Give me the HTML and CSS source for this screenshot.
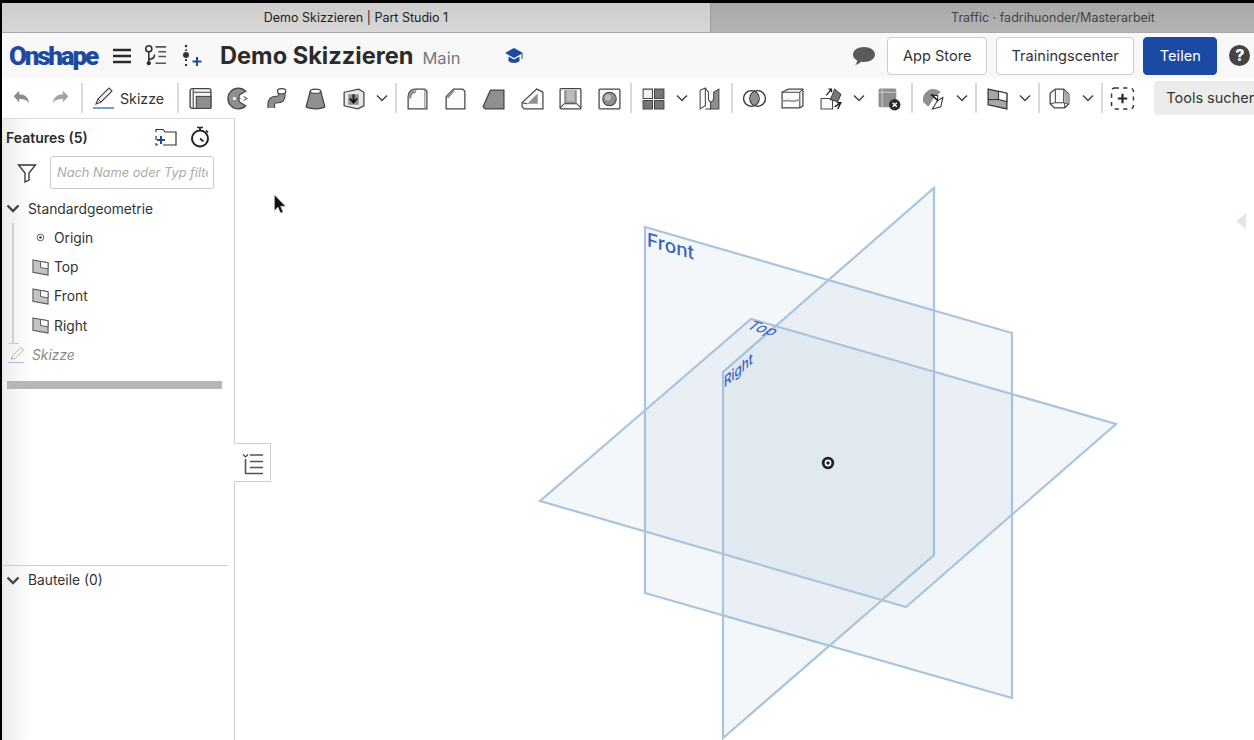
FILE: index.html
```html
<!DOCTYPE html>
<html lang="de">
  <head>
    <meta charset="UTF-8" />
    <title>Demo Skizzieren | Part Studio 1</title>
    <link rel="stylesheet" href="styles.css">
  </head>

  <body>
    <div class="tabs">
      <div class="tab active-tab">Demo Skizzieren | Part Studio 1</div>
      <div class="tab">Traffic · fadrihuonder/Masterarbeit</div>
    </div>

    <div class="header">
      <span class="logo">Onshape</span>
      <svg class="head-icon menu-icon" viewBox="0 0 20 16"><path d="M1 2h18M1 8h18M1 14h18" stroke="#2b2b2b" stroke-width="2.6"/></svg>
      <svg class="head-icon branch-icon" viewBox="0 0 26 24"><circle cx="6" cy="5" r="3.2" fill="none" stroke="#2b2b2b" stroke-width="1.6"/><circle cx="6" cy="20" r="2.2" fill="#2b2b2b"/><path d="M6 8v10M6 16c5 0 6-2 6-5" fill="none" stroke="#2b2b2b" stroke-width="1.6"/><path d="M13 3h11M16 8h8M16 13h8M13 20h11" stroke="#555" stroke-width="1.6"/></svg>
      <svg class="head-icon insert-icon" viewBox="0 0 24 24"><circle cx="6" cy="2" r="1.3" fill="#333"/><circle cx="6" cy="11" r="3" fill="#333"/><path d="M6 5.500v1.600M6 15v2M6 20v2" stroke="#333" stroke-width="2"/><path d="M17 13v9M12.500 17.500h9" stroke="#1b4aa0" stroke-width="2"/></svg>
      <h1 class="doc-title">Demo Skizzieren</h1>
      <span class="doc-branch">Main</span>
      <svg class="head-icon cap-icon" viewBox="0 0 20 18"><path d="M10 1 19 6 10 11 1 6z" fill="#1b4aa0"/><path d="M4.500 9.500V14c2 2.500 9 2.500 11 0V9.500L10 12.500z" fill="#1b4aa0"/><path d="M18 6v6" stroke="#1b4aa0"/></svg>
      <div class="head-right">
        <svg class="head-icon chat-icon" viewBox="0 0 24 20"><path d="M12 1c6 0 11 3 11 7.500S18 16 12 16c-1 0-2 0-3-.2C7.500 17.500 5.500 18.500 3 19c1-1 2-2.500 2.200-4.500C2.500 13 1 11 1 8.500 1 4 6 1 12 1z" fill="#5a5a5a"/></svg>
        <button class="btn">App Store</button>
        <button class="btn">Trainingscenter</button>
        <button class="btn btn-primary">Teilen</button>
        <span class="help">?</span>
        <svg class="help-chev" viewBox="0 0 8 5"><path d="M1 1l3 3 3-3" fill="none" stroke="#444" stroke-width="1.300"/></svg>
      </div>
    </div>

    <div class="toolbar">
      <div class="tool small"><svg viewBox="0 0 24 24"><path d="M4 10l6-6v4c6 0 10 3 11 10-2-4-6-5-11-5v4z" fill="#8c8c8c"/></svg></div>
      <div class="tool small redo"><svg viewBox="0 0 24 24"><path d="M20 10l-6-6v4C8 8 4 11 3 18c2-4 6-5 11-5v4z" fill="#a4a4a4"/></svg></div>
      <div class="sep"></div>
      <div class="sketch-btn">
        <svg viewBox="0 0 24 24"><path d="M4 18 6 13 17 2l3 3L9 16z" fill="#fff" stroke="#444" stroke-width="1.200"/><path d="M6 13l3 3" stroke="#444"/><path d="M1 22h21" stroke="#4a78c8" stroke-width="1.500"/></svg>
        <span>Skizze</span>
      </div>
      <div class="sep"></div>
      <div class="tool"><svg viewBox="0 0 24 24"><rect x="2" y="2.500" width="20" height="19" rx="2" fill="#f4f4f4" stroke="#444" stroke-width="1.300"/><path d="M5 3v18M5 6h17" stroke="#444"/><rect x="8" y="10" width="14" height="11.500" fill="#8f8f8f" stroke="#444"/></svg></div>
      <div class="tool"><svg viewBox="0 0 24 24"><path d="M19 5a10 10 0 1 0 0 14l-6-3.500-1-3.500 1-3.500z" fill="#8f8f8f" stroke="#444" stroke-width="1.200"/><circle cx="8" cy="12" r="1.500" fill="#fff"/><path d="M12 12h2M17 10l3 2-3 2" stroke="#555" fill="none"/></svg></div>
      <div class="tool"><svg viewBox="0 0 24 24"><path d="M6 21v-3c0-4 2-5 5-5s5-1 5-4V6" fill="none" stroke="#444" stroke-width="7.500"/><path d="M6 21v-3c0-4 2-5 5-5s5-1 5-4V6" fill="none" stroke="#8f8f8f" stroke-width="5.500"/><ellipse cx="16" cy="5" rx="4" ry="2.500" fill="#fff" stroke="#444" stroke-width="1.100"/></svg></div>
      <div class="tool"><svg viewBox="0 0 24 24"><path d="M7 5 3 20c3 2.500 15 2.500 18 0L17 5z" fill="#8f8f8f" stroke="#444" stroke-width="1.200"/><ellipse cx="12" cy="5" rx="5" ry="2" fill="#fff" stroke="#444"/></svg></div>
      <div class="tool"><svg viewBox="0 0 24 24"><path d="M3 6l14-3 5 3v13l-6 3-13-3z" fill="#e8e8e8" stroke="#444" stroke-width="1.200"/><path d="M7 8h10v10H7z" fill="#8f8f8f"/><path d="M12 8v7M8.500 12l3.500 4 3.500-4" fill="none" stroke="#111" stroke-width="1.800"/></svg></div>
      <div class="chev"><svg viewBox="0 0 12 8"><path d="M1 1.500l5 5 5-5" fill="none" stroke="#444" stroke-width="1.500"/></svg></div>
      <div class="sep"></div>
      <div class="tool nudge-1"><svg viewBox="0 0 24 24"><path d="M3 22V10c0-4 3-7 7-7h9l2 2v17z" fill="#fbfbfb" stroke="#444" stroke-width="1.200"/><path d="M3 12c0-5 3-8 8-8l-1 3c-3 0-4 2-4 5z" fill="#8f8f8f"/><path d="M19 3v19" stroke="#888"/></svg></div>
      <div class="tool"><svg viewBox="0 0 24 24"><path d="M3 22V10l7-7h9l2 2v17z" fill="#fbfbfb" stroke="#444" stroke-width="1.200"/><path d="M3 10l7-7 1 2-6 7z" fill="#8f8f8f"/></svg></div>
      <div class="tool"><svg viewBox="0 0 24 24"><path d="M2 20 9 4h13v18H4z" fill="#8f8f8f" stroke="#444" stroke-width="1.200"/></svg></div>
      <div class="tool"><svg viewBox="0 0 24 24"><path d="M2 16 16 3l6 3v16H4l-2-2z" fill="#fbfbfb" stroke="#444" stroke-width="1.200"/><path d="M7 17 17 7v10z" fill="#8f8f8f"/><path d="M2 16l5 1" stroke="#444"/></svg></div>
      <div class="tool"><svg viewBox="0 0 24 24"><rect x="2" y="2.500" width="20" height="19.500" rx="1" fill="#fbfbfb" stroke="#444" stroke-width="1.200"/><path d="M6 4h12v13H6z" fill="#8f8f8f"/><path d="M8 4h8v11H8z" fill="#bbb"/><path d="M2 21l4-4h12l4 4" fill="none" stroke="#444"/></svg></div>
      <div class="tool"><svg viewBox="0 0 24 24"><rect x="2" y="3" width="20" height="19" rx="1" fill="#fbfbfb" stroke="#444" stroke-width="1.200"/><circle cx="12" cy="12.500" r="6.500" fill="#8f8f8f" stroke="#444"/><circle cx="10.500" cy="11" r="3" fill="#bdbdbd"/></svg></div>
      <div class="sep"></div>
      <div class="tool"><svg viewBox="0 0 24 24"><path d="M2 12V3h9v9z" fill="#f2f2f2" stroke="#444"/><path d="M13 3h9v9h-9zM2 14h9v8H2zM13 14h9v8h-9z" fill="#777" stroke="#444"/></svg></div>
      <div class="chev"><svg viewBox="0 0 12 8"><path d="M1 1.500l5 5 5-5" fill="none" stroke="#444" stroke-width="1.500"/></svg></div>
      <div class="tool"><svg viewBox="0 0 24 24"><path d="M3 4l5-2v17l-5 3zM8 2l3 4v7l2 3v6H8" fill="#fbfbfb" stroke="#444"/><path d="M16 6l5-3v19h-8v-6l3-3z" fill="#8f8f8f" stroke="#444"/></svg></div>
      <div class="sep"></div>
      <div class="tool"><svg viewBox="0 0 24 24"><circle cx="9" cy="12" r="7.500" fill="#fbfbfb" stroke="#333" stroke-width="1.300"/><circle cx="15" cy="12" r="7.500" fill="none" stroke="#333" stroke-width="1.300"/><path d="M12 5.500a7.500 7.500 0 0 1 0 13 7.500 7.500 0 0 1 0-13z" fill="#8f8f8f"/></svg></div>
      <div class="tool"><svg viewBox="0 0 24 24"><path d="M2 6l6-3h14v16l-3 2H2z" fill="#fbfbfb" stroke="#444" stroke-width="1.200"/><path d="M2 6h17v15M19 6l3-3" fill="none" stroke="#444"/><path d="M2 15c6-3 10 2 17-2" fill="none" stroke="#999" stroke-width="1.500"/></svg></div>
      <div class="tool"><svg viewBox="0 0 24 24"><path d="M2 12h11v10H2z" fill="#fbfbfb" stroke="#444"/><path d="M15 3l6 5-3 7-7-2z" fill="#777" stroke="#444"/><path d="M7 9l5-6M9 3h3v3M15 20l6-4M18 22l3-6-4 0" fill="none" stroke="#222" stroke-width="1.300"/></svg></div>
      <div class="chev"><svg viewBox="0 0 12 8"><path d="M1 1.500l5 5 5-5" fill="none" stroke="#444" stroke-width="1.500"/></svg></div>
      <div class="tool nudge-2"><svg viewBox="0 0 24 24"><rect x="2" y="3" width="16" height="17" rx="1" fill="#8f8f8f" stroke="#888"/><path d="M5 3v17M2 6h16" stroke="#ccc"/><circle cx="17" cy="18" r="5.500" fill="#2b2b2b"/><path d="M15 16l4 4M19 16l-4 4" stroke="#fff" stroke-width="1.400"/></svg></div>
      <div class="sep"></div>
      <div class="tool"><svg viewBox="0 0 24 24"><path d="M2 15a10 10 0 0 1 17-9l-6 4-4 7-2 3z" fill="#8f8f8f"/><path d="M10 9h6v5zM16 14l5-3-2 9-8 2 3-5z" fill="#fff" stroke="#333"/><path d="M10 8l6 6" stroke="#222" stroke-width="1.400"/></svg></div>
      <div class="chev"><svg viewBox="0 0 12 8"><path d="M1 1.500l5 5 5-5" fill="none" stroke="#444" stroke-width="1.500"/></svg></div>
      <div class="sep"></div>
      <div class="tool nudge-1"><svg viewBox="0 0 24 24"><path d="M3 3l18 4v15L3 18z" fill="#a6a6a6" stroke="#333" stroke-width="1.200"/><path d="M13 5l8 2v8l-8-2z" fill="#fbfbfb" stroke="#333"/><path d="M3 13h10" stroke="#333"/></svg></div>
      <div class="chev"><svg viewBox="0 0 12 8"><path d="M1 1.500l5 5 5-5" fill="none" stroke="#444" stroke-width="1.500"/></svg></div>
      <div class="sep"></div>
      <div class="tool"><svg viewBox="0 0 24 24"><path d="M3 7l5-4h8l5 5v9l-4 4H7l-4-4z" fill="#fbfbfb" stroke="#444" stroke-width="1.200"/><path d="M8 3v13l-5 1M8 16h9v5M16 3v13l5 1" fill="none" stroke="#444"/><path d="M16 4l5 4v9l-4-1z" fill="#aaa"/></svg></div>
      <div class="chev"><svg viewBox="0 0 12 8"><path d="M1 1.500l5 5 5-5" fill="none" stroke="#444" stroke-width="1.500"/></svg></div>
      <div class="sep"></div>
      <div class="tool"><svg viewBox="0 0 24 24"><rect x="1.500" y="2" width="21" height="20" rx="3" fill="none" stroke="#333" stroke-width="1.400" stroke-dasharray="4 4.200"/><path d="M12 7.500v9M7.500 12h9" stroke="#222" stroke-width="2"/></svg></div>
      <div class="tool-search">Tools suchen</div>
    </div>

    <div class="main">
      <div class="sidebar">
        <div class="feat-head">
          <span class="feat-title">Features (5)</span>
          <svg class="folder-icon" viewBox="0 0 22 18"><path d="M1 4V1.500h7L10 4h11v13H8" fill="none" stroke="#333" stroke-width="1.200"/><path d="M1 8v4M1 15v2h2" stroke="#333" stroke-width="1.200" fill="none"/><path d="M6 8v8M2 12h8" stroke="#1b4aa0" stroke-width="2"/></svg>
          <svg class="timer-icon" viewBox="0 0 20 22"><circle cx="10" cy="12.500" r="8" fill="none" stroke="#222" stroke-width="2"/><path d="M7 1.500h6M10 2v2.500M16 4.500l2 2M10 12.500l3.500 3" stroke="#222" stroke-width="1.700" fill="none"/></svg>
        </div>
        <div class="filter-row">
          <svg class="filter-icon" viewBox="0 0 20 20"><path d="M1.500 2h17l-6.500 8v7l-4 2v-9z" fill="none" stroke="#333" stroke-width="1.300"/></svg>
          <div class="filter-input"><span>Nach Name oder Typ filtern</span></div>
        </div>
        <div class="tree-head">
          <svg class="tree-chev" viewBox="0 0 14 9"><path d="M1.500 1.500 7 7l5.500-5.500" fill="none" stroke="#444" stroke-width="2.400"/></svg>
          <span>Standardgeometrie</span>
        </div>
        <ul class="tree">
          <li><svg class="tree-icon" viewBox="0 0 18 18"><circle cx="9" cy="9" r="3.500" fill="none" stroke="#555"/><circle cx="9" cy="9" r="1.400" fill="#444"/></svg>Origin</li>
          <li><svg class="tree-icon" viewBox="0 0 18 18"><path d="M1 1l16 3v13L1 14z" fill="#c4c4c4" stroke="#555" stroke-width="1.100"/><path d="M9 2.500l8 1.500v6.500l-8-1.500z" fill="#fff" stroke="#555"/></svg>Top</li>
          <li><svg class="tree-icon" viewBox="0 0 18 18"><path d="M1 1l16 3v13L1 14z" fill="#c4c4c4" stroke="#555" stroke-width="1.100"/><path d="M9 2.500l8 1.500v6.500l-8-1.500z" fill="#fff" stroke="#555"/></svg>Front</li>
          <li><svg class="tree-icon" viewBox="0 0 18 18"><path d="M1 1l16 3v13L1 14z" fill="#c4c4c4" stroke="#555" stroke-width="1.100"/><path d="M9 2.500l8 1.500v6.500l-8-1.500z" fill="#fff" stroke="#555"/></svg>Right</li>
        </ul>
        <div class="sketch-row">
          <svg viewBox="0 0 18 18"><path d="M3 13 4.500 10 13 1.500 15.500 4 7 12.500z" fill="#fff" stroke="#aaa"/><path d="M0 16.500h16" stroke="#a8bfe0"/></svg>
          <span>Skizze</span>
        </div>
        <div class="roll-bar"></div>
        <div class="parts-head">
          <svg class="tree-chev" viewBox="0 0 14 9"><path d="M1.500 1.500 7 7l5.500-5.500" fill="none" stroke="#444" stroke-width="2.400"/></svg>
          <span>Bauteile (0)</span>
        </div>
      </div>

      <div class="viewport">
        <div class="panel-tab">
          <svg viewBox="0 0 22 22"><path d="M1 1.500l2.500 2.500L6 1.500" fill="none" stroke="#444" stroke-width="1.200"/><path d="M3.500 6v15" stroke="#555" stroke-width="1.600"/><path d="M8 2h13M8 8.500h13M8 14.500h13M3.500 20.500H21" stroke="#555" stroke-width="1.300"/></svg>
        </div>

        <svg class="scene" viewBox="235 118 1019 622">
          <g class="plane">
            <polygon points="645,227 1012,333 1012,698 645,593"/>
            <polygon points="934,188 934,555 723,738 723,372"/>
            <polygon points="751,319 1116,424 906,607 540,501"/>
          </g>
          <text class="label label-front" transform="matrix(1 .289 0 1 647 246)">Front</text>
          <text class="label label-top" transform="matrix(.96 .276 -.75 .65 745 328)">Top</text>
          <text class="label label-right" transform="matrix(.755 -.655 0 1 724 388)">Right</text>
          <circle cx="828" cy="463" r="4.800" fill="#fff" stroke="#222" stroke-width="2.800"/>
          <circle cx="828" cy="463" r="1.800" fill="#222"/>
          <polygon points="1236,221 1246,213 1246,229" fill="#dfe6ee"/>
          <path d="M274.500 195v15.500l3.500-3.500 2.500 6 2.500-1-2.500-5.800h5z" fill="#111" stroke="#bbb" stroke-width=".6"/>
        </svg>
      </div>
    </div>
  </body>
</html>
```

FILE: styles.css
```css
* {
  margin: 0;
  padding: 0;
  box-sizing: border-box;
}

html,
body {
  height: 740px;
  overflow: hidden;
}

body {
  font-family: Inter, "Noto Sans", sans-serif;
  font-size: 14px;
  color: #333;
  background: #fff;
  border-top: 3px solid #000;
  border-left: 2px solid #000;
}

li {
  list-style: none;
}

/* browser tabs */
.tabs {
  display: flex;
  height: 30px;
  border-bottom: 1px solid #aaa;
  font-size: 12.500px;
  overflow: hidden;
}

.tab {
  flex: 0 0 auto;
  width: 684px;
  line-height: 29px;
  text-align: center;
  color: #444;
  background: linear-gradient(#a8a8a8, #b4b4b4);
}

.active-tab {
  width: 709px;
  color: #222;
  background: linear-gradient(#cdcdcd, #d7d7d7);
  border-right: 1px solid #999;
}

/* document header */
.header {
  display: flex;
  align-items: center;
  height: 45px;
  padding-left: 7px;
  background: #f8f8f8;
  overflow: hidden;
}

.header > * {
  flex-shrink: 0;
}

.logo {
  width: 90px;
  font-family: Roboto, sans-serif;
  font-size: 26px;
  font-weight: 900;
  letter-spacing: -2.200px;
  color: #1b4aa0;
}

.menu-icon {
  width: 20px;
  height: 16px;
  margin-left: 13px;
}

.branch-icon {
  width: 25px;
  height: 23px;
  margin-left: 11px;
}

.insert-icon {
  width: 24px;
  height: 24px;
  margin-left: 12px;
}

.doc-title {
  margin-left: 16px;
  font-size: 23.600px;
  font-weight: 700;
  color: #2b2b2b;
  white-space: nowrap;
}

.doc-branch {
  margin-left: 9px;
  padding-top: 4px;
  font-size: 16.500px;
  color: #777;
}

.cap-icon {
  width: 20px;
  height: 18px;
  margin-left: 44px;
}

.head-right {
  display: flex;
  align-items: center;
  margin-left: 328px;
}

.chat-icon {
  width: 24px;
  height: 20px;
  margin-right: 11px;
}

.btn {
  height: 38px;
  padding: 0 14.500px;
  margin-right: 9px;
  font: 14.600px Inter, "Noto Sans", sans-serif;
  color: #333;
  background: #fff;
  border: 1px solid #ccc;
  border-radius: 4px;
}

.btn-primary {
  padding: 0 15.500px;
  color: #fff;
  background: #1a4aa3;
  border-color: #1a4aa3;
}

.help {
  flex: 0 0 21px;
  height: 21px;
  margin-left: 3px;
  border-radius: 50%;
  font-size: 16px;
  font-weight: 800;
  line-height: 21px;
  text-align: center;
  color: #fff;
  background: #444;
}

.help-chev {
  flex: 0 0 8px;
  height: 5px;
  margin-left: 3px;
}

/* feature toolbar */
.toolbar {
  display: flex;
  align-items: center;
  height: 40px;
  background: #fff;
  white-space: nowrap;
  overflow: hidden;
}

.tool {
  flex: 0 0 38.400px;
  display: flex;
  justify-content: center;
}

.tool svg {
  width: 25px;
  height: 25px;
}

.tool.small {
  flex-basis: 38px;
}

.tool.small svg {
  width: 22px;
  height: 22px;
}

.redo {
  margin-left: 2px;
  margin-right: -1px;
}

.nudge-1 {
  margin-left: 1px;
}

.nudge-2 {
  margin-left: 2px;
}

.chev {
  flex: 0 0 18px;
  display: flex;
  justify-content: center;
}

.chev svg {
  width: 12px;
  height: 8px;
}

.sep {
  flex: 0 0 2px;
  height: 30px;
  margin: 0 2px;
  background: #d9d9d9;
}

.chev + .sep {
  margin: 0 0 0 4px;
}

.sketch-btn {
  display: flex;
  align-items: center;
  gap: 4px;
  flex: 0 0 auto;
  padding: 0 11px 0 7px;
  font-size: 14.200px;
  color: #333;
}

.sketch-btn svg {
  width: 24px;
  height: 24px;
}

.tool-search {
  flex: 0 0 auto;
  height: 34px;
  margin-left: 13px;
  padding: 0 12px;
  font-size: 14.500px;
  line-height: 34px;
  border-radius: 4px;
  background: #ececec;
}

/* feature list */
.main {
  display: flex;
  height: 622px;
}

.sidebar {
  flex: 0 0 233px;
  border-right: 1px solid #cfcfcf;
  border-top: 1px solid #dcdcdc;
  background: linear-gradient(to right, #ececec, #fff 30px);
  overflow: hidden;
}

.feat-head {
  display: flex;
  align-items: center;
  height: 36px;
  padding-left: 4px;
}

.feat-title {
  width: 149px;
  font-weight: 600;
  color: #2b2b2b;
}

.folder-icon {
  width: 22px;
  height: 18px;
}

.timer-icon {
  width: 20px;
  height: 22px;
  margin-left: 13px;
}

.filter-row {
  display: flex;
  align-items: center;
  height: 33px;
  margin-top: 1px;
}

.filter-icon {
  width: 20px;
  height: 20px;
  margin: 0 13px 0 15px;
}

.filter-input {
  width: 164px;
  height: 33px;
  padding: 0 5px 0 6px;
  font-size: 12.800px;
  line-height: 31px;
  font-style: italic;
  white-space: nowrap;
  color: #aaa;
  background: #fff;
  border: 1px solid #ccc;
  border-radius: 3px;
  overflow: hidden;
}

.filter-input span {
  display: block;
  overflow: hidden;
}

.tree-head,
.parts-head {
  display: flex;
  align-items: center;
  gap: 8px;
  height: 29px;
  padding-left: 4px;
  font-size: 13.800px;
}

.tree-head {
  margin-top: 5px;
}

.tree-chev {
  width: 14px;
  height: 9px;
}

.tree {
  position: relative;
  padding-left: 30px;
  font-size: 13.800px;
}

/* line that joins the default planes */
.tree::before {
  content: "";
  position: absolute;
  left: 6px;
  top: 0;
  bottom: -3px;
  width: 11px;
  border-bottom: 1px solid #cfcfcf;
  background: linear-gradient(#cfcfcf, #cfcfcf) no-repeat 4px 0 / 2px 100%;
}

.tree li {
  display: flex;
  align-items: center;
  gap: 5px;
  height: 29.400px;
}

.tree-icon {
  width: 17px;
  height: 17px;
  flex: 0 0 auto;
}

.sketch-row {
  display: flex;
  align-items: center;
  gap: 6px;
  height: 29px;
  padding-left: 6px;
  font-size: 13.800px;
  font-style: italic;
  color: #8a8a8a;
}

.sketch-row svg {
  width: 18px;
  height: 18px;
}

.roll-bar {
  width: 215px;
  height: 8px;
  margin: 11px 0 176px 5px;
  background: #b6b6b6;
}

.parts-head {
  width: 226px;
  height: 30px;
  border-top: 1px solid #cfcfcf;
}

/* 3d view */
.viewport {
  position: relative;
  flex: 1;
}

.scene {
  position: absolute;
  left: 0;
  top: 0;
  width: 1019px;
  height: 622px;
}

.plane polygon {
  fill: rgba(130, 165, 200, 0.085);
  stroke: #a9c4df;
  stroke-width: 2.200;
}

.label {
  font-family: Inter, "Noto Sans", sans-serif;
  fill: #3a62bc;
}

.label-front {
  font-size: 19px;
  font-weight: 500;
}

.label-top {
  font-size: 16px;
}

.label-right {
  font-size: 15.500px;
  font-weight: 500;
}

.panel-tab {
  position: absolute;
  left: -1px;
  top: 325px;
  z-index: 2;
  width: 37px;
  height: 39px;
  padding: 9px 0 0 7px;
  background: #fff;
  border: 1px solid #cfcfcf;
  border-left: 1px solid #fff;
}

.panel-tab svg {
  display: block;
  width: 22px;
  height: 22px;
}
```
